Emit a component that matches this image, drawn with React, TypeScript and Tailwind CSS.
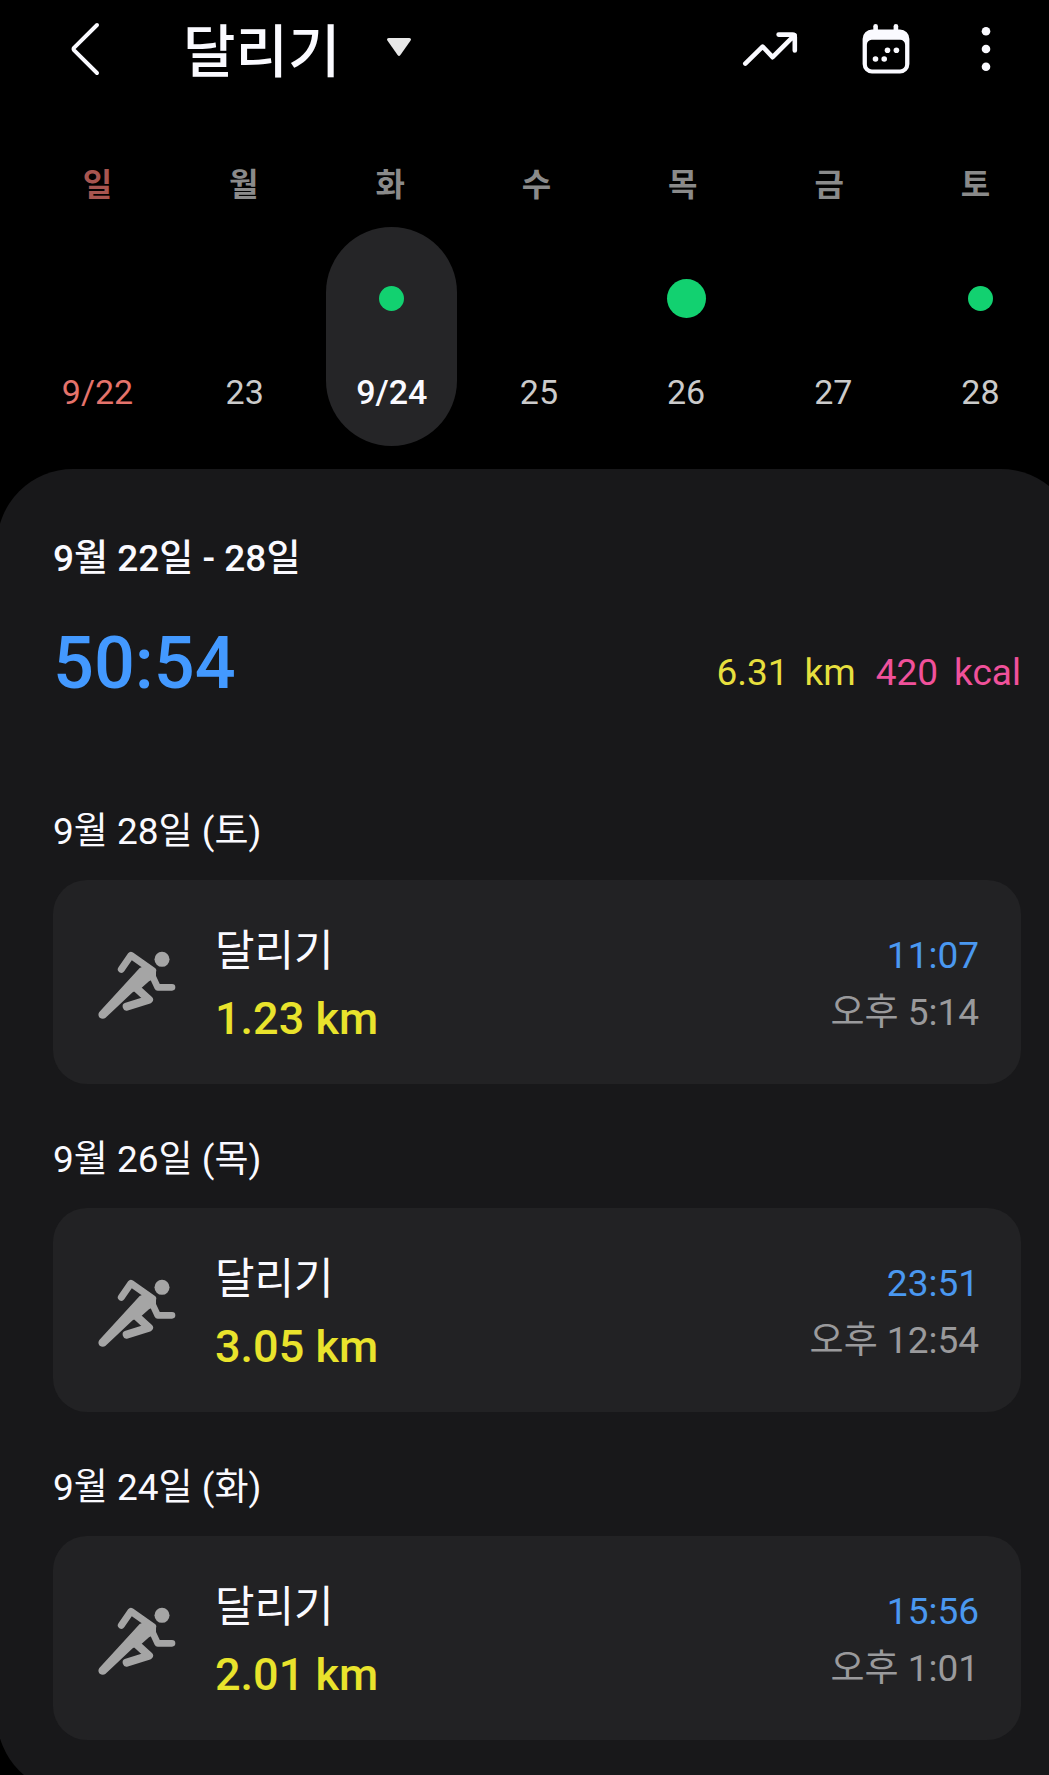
import { useState } from 'react';
import clsx from 'clsx';

type Day = {
  id: string;
  label: string;
  activity?: 'small' | 'large';
  holiday?: boolean;
};

type Workout = {
  id: string;
  day: string;
  distance: string;
  duration: string;
  startedAt: string;
};

const WEEKDAYS = ['일', '월', '화', '수', '목', '금', '토'];

const DAYS: Day[] = [
  { id: '22', label: '9/22', holiday: true },
  { id: '23', label: '23' },
  { id: '24', label: '9/24', activity: 'small' },
  { id: '25', label: '25' },
  { id: '26', label: '26', activity: 'large' },
  { id: '27', label: '27' },
  { id: '28', label: '28', activity: 'small' },
];

const WORKOUTS: Workout[] = [
  { id: 'w28', day: '9월 28일 (토)', distance: '1.23 km', duration: '11:07', startedAt: '오후 5:14' },
  { id: 'w26', day: '9월 26일 (목)', distance: '3.05 km', duration: '23:51', startedAt: '오후 12:54' },
  { id: 'w24', day: '9월 24일 (화)', distance: '2.01 km', duration: '15:56', startedAt: '오후 1:01' },
];

function BackIcon() {
  return (
    <svg className="h-[54px] w-[30px]" viewBox="0 0 30 54" fill="none" stroke="currentColor" strokeWidth="4" strokeLinecap="round" strokeLinejoin="round">
      <path d="M27 3 4.2 25.6Q3 27 4.2 28.4L27 51" />
    </svg>
  );
}

function CaretIcon() {
  return (
    <svg className="mb-1 h-[18px] w-[24px]" viewBox="0 0 24 18" fill="#e8e8e8">
      <path d="M1.6 0H22.4Q24.8 .6 23.6 2.6L13.4 17Q12 18.8 10.6 17L.4 2.6Q-.8 .6 1.6 0Z" />
    </svg>
  );
}

function TrendIcon() {
  return (
    <svg className="h-[36px] w-[56px]" viewBox="0 0 56 36" fill="none" stroke="currentColor" strokeWidth="4.6" strokeLinecap="round" strokeLinejoin="round">
      <path d="M3.3 32.6 20.6 15.6 30.6 26.2 52.6 4.2M36.6 3.6H50.4Q52.8 3.6 52.8 6V19.4" />
    </svg>
  );
}

function CalendarIcon() {
  return (
    <svg className="h-[50px] w-[48px]" viewBox="0 0 48 50" fill="currentColor">
      <rect x="11.3" y="0" width="4.6" height="12" rx="2.3" />
      <rect x="31.6" y="0" width="4.6" height="12" rx="2.3" />
      <path fillRule="evenodd" d="M10 5.6H38A9.4 9.4 0 0 1 47.4 15V40A9.4 9.4 0 0 1 38 49.4H10A9.4 9.4 0 0 1 .6 40V15A9.4 9.4 0 0 1 10 5.6ZM9.6 15.8A5 5 0 0 0 4.9 20.8V40.4A5 5 0 0 0 9.9 45.4H38.1A5 5 0 0 0 43.1 40.4V20.8A5 5 0 0 0 38.1 15.8Z" />
      <circle cx="25.5" cy="26.2" r="2.8" />
      <circle cx="34.4" cy="26.2" r="2.8" />
      <circle cx="13.5" cy="35" r="2.8" />
      <circle cx="22.2" cy="35" r="2.8" />
    </svg>
  );
}

function MoreIcon() {
  return (
    <svg className="h-[48px] w-[24px]" viewBox="0 0 24 48" fill="currentColor">
      <circle cx="12" cy="6.3" r="4.3" />
      <circle cx="12" cy="24" r="4.3" />
      <circle cx="12" cy="41.7" r="4.3" />
    </svg>
  );
}

function RunnerIcon() {
  return (
    <svg className="size-20 shrink-0 text-[#a5a5a5]" viewBox="21 21 240 240" fill="currentColor" aria-hidden="true">
      <circle cx="216" cy="73" r="22.5" />
      <g fill="none" stroke="currentColor" strokeLinecap="round" strokeLinejoin="round">
        <path strokeWidth="21" d="M94 103 123 61 188 107" />
        <path strokeWidth="20" d="M188 112V125L203 157H246" />
        <path strokeWidth="24" d="M140 160 177 194 110 215" />
      </g>
      <path d="M149 99 28 231Q22 240 29 248 38 254 46 249L128 172 155 158 177 139 198 128V104L175 88Z" />
    </svg>
  );
}

function DayCell({ day, selected, onSelect }: { day: Day; selected: boolean; onSelect: () => void }) {
  return (
    <button
      type="button"
      aria-pressed={selected}
      onClick={onSelect}
      className={clsx('flex w-[131px] flex-col items-center rounded-full pb-[31px]', selected && 'bg-[#252527]')}
    >
      <span className="flex h-[142px] items-center">
        {day.activity === 'small' && <span className="size-[25px] rounded-full bg-[#12d170]" />}
        {day.activity === 'large' && <span className="size-[39px] rounded-full bg-[#12d170]" />}
      </span>
      <span
        className={clsx(
          'text-[34px] leading-[46px]',
          selected ? 'font-medium text-[#fafaff]' : day.holiday ? 'text-[#e5736b]' : 'text-[#cbcbcb]'
        )}
      >
        {day.label}
      </span>
    </button>
  );
}

function WorkoutCard({ workout }: { workout: Workout }) {
  return (
    <article className="flex h-[204px] items-center rounded-[34px] bg-[#222224] pr-[42px] pl-11">
      <RunnerIcon />
      <div className="ml-[38px] flex-1 pt-1.5">
        <h3 className="text-[43px] leading-[68px] text-[#fafaff]">달리기</h3>
        <p className="text-[45px] leading-[68px] font-medium text-[#e9e32c]">{workout.distance}</p>
      </div>
      <div className="pt-1 text-right text-[37px] leading-[57px]">
        <p className="text-[#4a98f0]">{workout.duration}</p>
        <p className="text-[#9a9a9c]">{workout.startedAt}</p>
      </div>
    </article>
  );
}

export default function App() {
  const [selectedDay, setSelectedDay] = useState('24');

  return (
    <div className="h-screen overflow-x-hidden overflow-y-auto bg-black font-['Roboto','Noto_Sans_CJK_KR',sans-serif] text-[#fafaff] [scrollbar-width:none]">
      <header className="flex h-[98px] items-center pr-[51px] pl-[70px]">
        <button type="button" aria-label="뒤로">
          <BackIcon />
        </button>
        <button type="button" className="ml-[83px] flex items-center gap-[47px]">
          <h1 className="pt-2 text-[57px] leading-[80px] font-medium">달리기</h1>
          <CaretIcon />
        </button>
        <div className="ml-auto flex items-center gap-16">
          <button type="button" aria-label="추세">
            <TrendIcon />
          </button>
          <button type="button" aria-label="달력">
            <CalendarIcon />
          </button>
          <button type="button" aria-label="더보기">
            <MoreIcon />
          </button>
        </div>
      </header>

      <section className="pt-[67px]">
        <div className="flex justify-between pr-2 pl-8 text-[32px] leading-[40px] font-bold text-[#8a8a8a]">
          {WEEKDAYS.map((name, i) => (
            <span key={name} className={clsx('w-[131px] text-center', i === 0 && 'text-[#a85550]')}>
              {name}
            </span>
          ))}
        </div>
        <div className="mt-[22px] flex justify-between pr-[3px] pl-8">
          {DAYS.map((day) => (
            <DayCell key={day.id} day={day} selected={day.id === selectedDay} onSelect={() => setSelectedDay(day.id)} />
          ))}
        </div>
      </section>

      {/* the sheet runs a little past both screen edges */}
      <main className="mt-[23px] -mr-7 -ml-[3px] rounded-[76px] bg-[#18181a] px-14 pt-[65px] pb-[53px]">
        <h2 className="text-[37px] leading-[50px] font-medium">9월 22일 - 28일</h2>
        <div className="mt-10 flex items-end justify-between">
          <p className="text-[72px] leading-[80px] font-medium text-[#4399ff]">50:54</p>
          <p className="flex gap-5 pb-1.5 text-[37px] leading-[50px]">
            <span className="flex gap-4 text-[#e6df3e]">
              <span>6.31</span>
              <span>km</span>
            </span>
            <span className="flex gap-4 text-[#f0519b]">
              <span>420</span>
              <span>kcal</span>
            </span>
          </p>
        </div>

        <div className="mt-[103px] flex flex-col gap-[51px]">
          {WORKOUTS.map((workout) => (
            <section key={workout.id}>
              <h2 className="mb-[23px] text-[37px] leading-[50px]">{workout.day}</h2>
              <WorkoutCard workout={workout} />
            </section>
          ))}
        </div>
      </main>
    </div>
  );
}
